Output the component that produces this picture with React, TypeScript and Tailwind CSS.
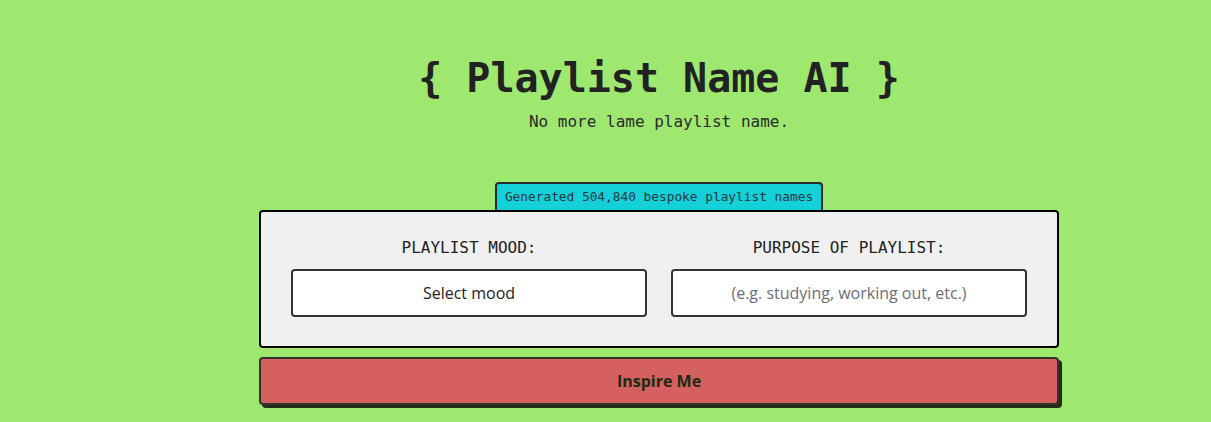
import { useState } from "react";

const moods = ["Happy", "Sad", "Chill", "Energetic", "Romantic", "Angry"];

export default function App() {
  const [mood, setMood] = useState<string>("");
  const [purpose, setPurpose] = useState<string>("");

  return (
    <main className="min-h-screen w-full bg-[#9fe870] flex flex-col items-center pt-[54px] pl-[107px] font-['DejaVu_Sans_Mono',monospace] text-[#222222]">
      <h1 className="text-[40px] leading-[48px] font-bold">{"{ Playlist Name AI }"}</h1>
      <p className="mt-2 text-[16px] leading-6 text-[#2b2b2b]">No more lame playlist name.</p>

      <div className="mt-12 w-[800px] flex flex-col items-center">
        <div className="h-[28px] px-[8px] flex items-center bg-[#14d0d8] border-2 border-b-0 border-[#2a2a2a] rounded-t-[4px] text-[12.8px] text-[#243a3c]">
          Generated 504,840 bespoke playlist names
        </div>
        <div className="w-full bg-[#f0f0f0] border-2 border-black rounded-[4px] px-[30px] pt-6 pb-[29px] grid grid-cols-2 gap-x-6">
          <div className="flex flex-col items-center">
            <label className="text-[16px] leading-6 text-[#222]">PLAYLIST MOOD:</label>
            <select
              value={mood}
              onChange={(e) => setMood(e.target.value)}
              className="mt-[9px] w-full h-[48px] bg-white border-2 border-[#333333] rounded-[4px] text-center text-[16px] text-[#222] font-['Open_Sans',sans-serif] appearance-none outline-none"
            >
              <option value="">Select mood</option>
              {moods.map((m) => (
                <option key={m} value={m}>
                  {m}
                </option>
              ))}
            </select>
          </div>
          <div className="flex flex-col items-center">
            <label className="text-[16px] leading-6 text-[#222]">PURPOSE OF PLAYLIST:</label>
            <input
              type="text"
              value={purpose}
              onChange={(e) => setPurpose(e.target.value)}
              placeholder="(e.g. studying, working out, etc.)"
              className="mt-[9px] w-full h-[48px] bg-white border-2 border-[#333333] rounded-[4px] text-center text-[16px] text-[#222] placeholder:text-[#6b6f76] font-['Open_Sans',sans-serif] outline-none"
            />
          </div>
        </div>
        <button
          type="button"
          className="mt-[9px] w-full h-[48px] bg-[#d56060] border-2 border-[#333333] rounded-[4px] shadow-[3px_3px_0_rgba(0,0,0,0.8)] text-[16px] font-bold text-[#1c2b10] font-['Open_Sans',sans-serif]"
        >
          Inspire Me
        </button>
      </div>
    </main>
  );
}
